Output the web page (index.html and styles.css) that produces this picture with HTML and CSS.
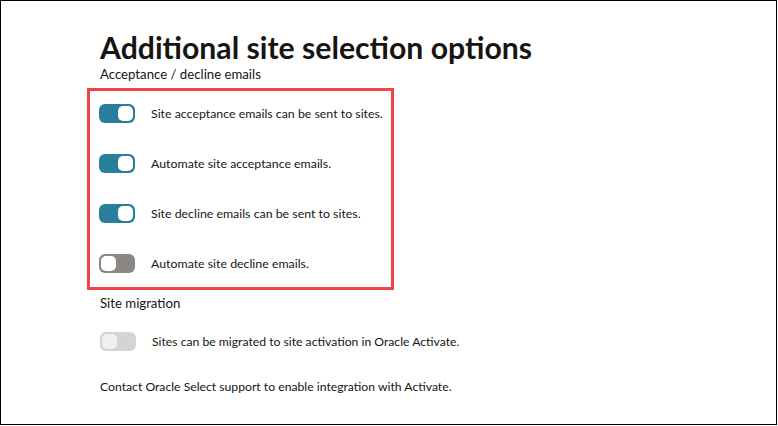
FILE: index.html
```html
<!DOCTYPE html>
<html>
<head>
<meta charset="utf-8">
<link rel="stylesheet" href="styles.css">
</head>
<body>
<div class="frame">
  <h1 class="title">Additional site selection options</h1>
  <div class="section-label">Acceptance / decline emails</div>
  <div class="highlight">
    <div class="row">
      <span class="toggle on"><span class="knob"></span></span>
      <span class="row-text">Site acceptance emails can be sent to sites.</span>
    </div>
    <div class="row">
      <span class="toggle on"><span class="knob"></span></span>
      <span class="row-text">Automate site acceptance emails.</span>
    </div>
    <div class="row">
      <span class="toggle on"><span class="knob"></span></span>
      <span class="row-text">Site decline emails can be sent to sites.</span>
    </div>
    <div class="row">
      <span class="toggle off"><span class="knob"></span></span>
      <span class="row-text">Automate site decline emails.</span>
    </div>
  </div>
  <div class="section-label migration">Site migration</div>
  <div class="row plain">
    <span class="toggle disabled"><span class="knob"></span></span>
    <span class="row-text">Sites can be migrated to site activation in Oracle Activate.</span>
  </div>
  <div class="note">Contact Oracle Select support to enable integration with Activate.</div>
</div>
</body>
</html>
```

FILE: styles.css
```css
html, body {
  margin: 0;
  padding: 0;
  background: #fff;
}
.frame {
  box-sizing: border-box;
  width: 777px;
  height: 425px;
  border: 1px solid #000;
  padding: 28px 0 0 99px;
  font-family: "Lato", "Noto Sans", sans-serif;
  color: #161513;
  display: flex;
  flex-direction: column;
  align-items: flex-start;
}
.title {
  margin: 0;
  font-size: 30.2px;
  font-weight: 700;
  line-height: 36px;
  letter-spacing: 0;
}
.section-label {
  font-size: 13.2px;
  line-height: 18px;
}
.highlight {
  box-sizing: border-box;
  margin: 5px 0 0 -13px;
  width: 307px;
  border: 3px solid #f0434a;
  padding: 0 0 2px 9px;
  display: flex;
  flex-direction: column;
  gap: 6px;
}
.row {
  display: flex;
  align-items: center;
  height: 44px;
  gap: 16px;
}
.row.plain {
  height: 50px;
  margin-top: 4px;
}
.row-text {
  font-size: 12.35px;
  white-space: nowrap;
}
.row.plain .row-text {
  font-size: 12.2px;
}
.toggle {
  box-sizing: border-box;
  position: relative;
  width: 36px;
  height: 19px;
  border-radius: 6px;
  flex: none;
}
.knob {
  position: absolute;
  top: 2px;
  width: 15px;
  height: 15px;
  border-radius: 5px;
  background: #fff;
}
.toggle.on {
  background: #2a7d9b;
}
.toggle.on .knob {
  right: 2px;
}
.toggle.off {
  background: #8b8782;
}
.toggle.off .knob {
  left: 2px;
}
.toggle.disabled {
  background: #d4d4d4;
}
.toggle.disabled .knob {
  left: 2px;
  background: #f1f0ef;
}
.migration {
  margin-top: 4px;
}
.note {
  font-size: 12.2px;
  margin-top: 13px;
}
```
